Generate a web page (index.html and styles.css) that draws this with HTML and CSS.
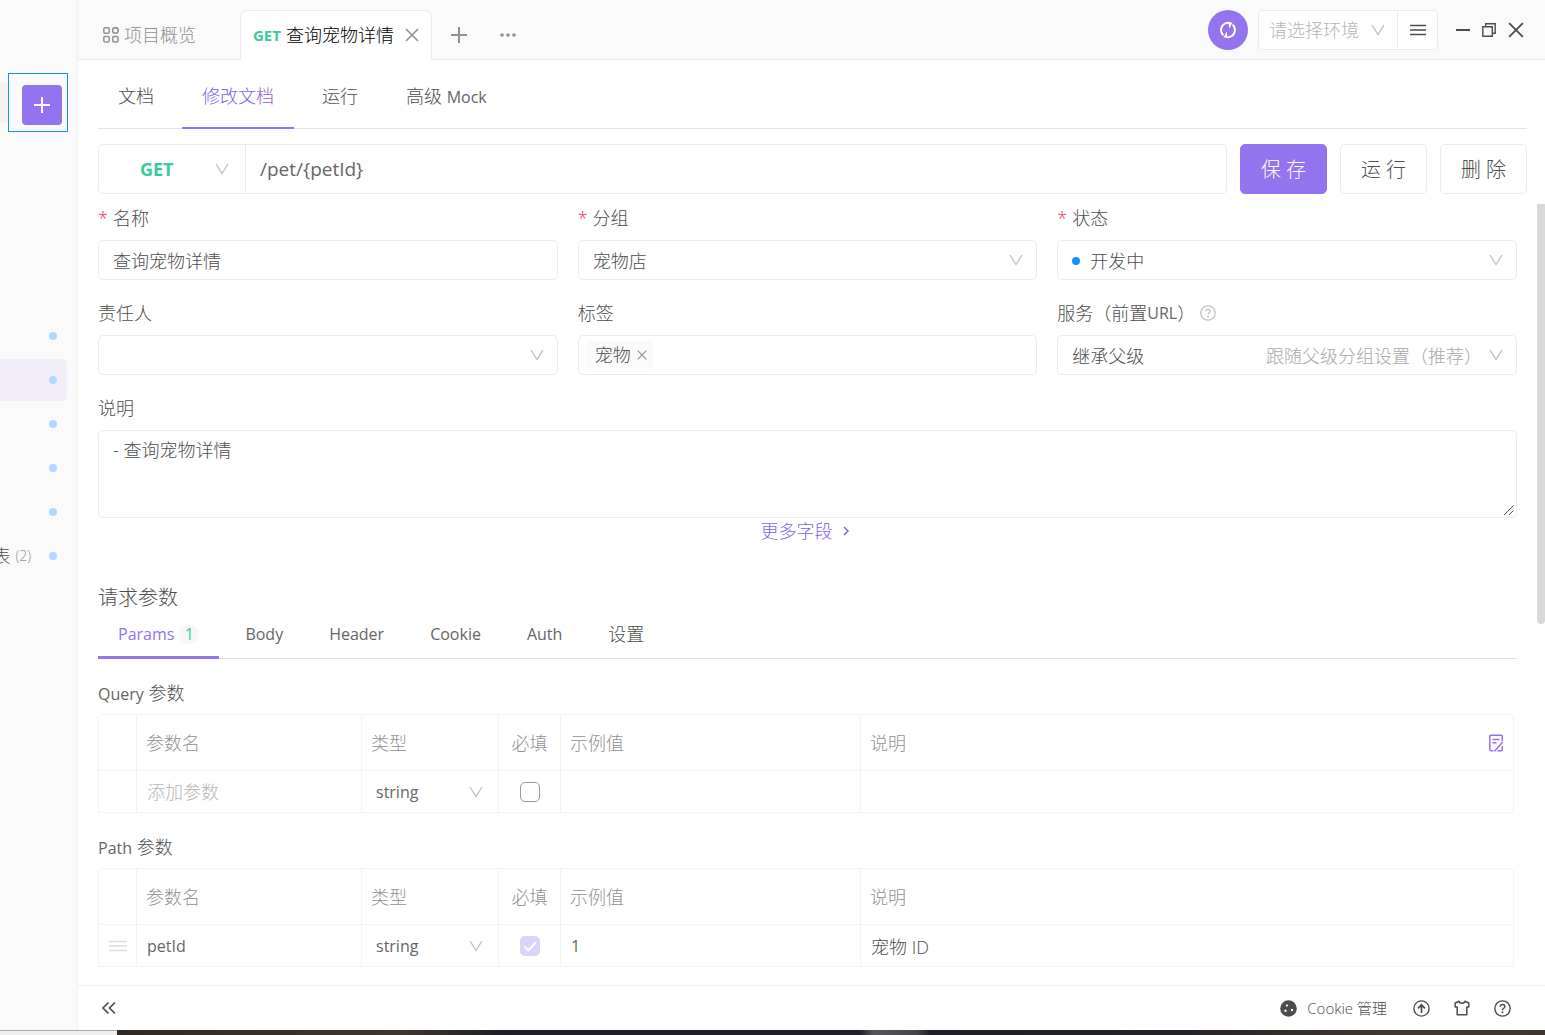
FILE: index.html
```html
<!DOCTYPE html>
<html lang="zh-CN">
<head>
<meta charset="utf-8">
<title>查询宠物详情</title>
<link rel="stylesheet" href="styles.css">
</head>
<body>
<svg class="sprite" aria-hidden="true">
  <symbol id="chevron" viewBox="0 0 14 12"><path d="M1 1l6 9.500L13 1" fill="none" stroke="currentColor" stroke-width="1.300"/></symbol>
  <symbol id="cross" viewBox="0 0 14 14"><path d="M1 1l12 12M13 1L1 13" fill="none" stroke="currentColor" stroke-width="1.600"/></symbol>
  <symbol id="plus" viewBox="0 0 16 16"><path d="M8 0v16M0 8h16" fill="none" stroke="currentColor" stroke-width="2"/></symbol>
  <symbol id="lines" viewBox="0 0 16 12"><path d="M0 1.500h16M0 6h16M0 10.500h16" fill="none" stroke="currentColor" stroke-width="1.600"/></symbol>
  <symbol id="help" viewBox="0 0 16 16"><g fill="none" stroke="currentColor" stroke-width="1.300"><circle cx="8" cy="8" r="7.200"/><path d="M5.900 6.300c0-2.700 4.300-2.700 4.300 0C10.200 7.800 8 7.900 8 9.600"/></g><circle cx="8" cy="11.600" r=".9" fill="currentColor"/></symbol>
</svg>
<div class="app">
  <div class="workspace">
    <aside class="sidebar">
      <div class="sidebar-tools">
        <span class="search-end"></span>
        <div class="add-frame"><button class="add" aria-label="新建"><svg width="16" height="16"><use href="#plus"/></svg></button></div>
      </div>
      <ul class="tree">
        <li><i class="dot"></i></li>
        <li class="current"><i class="dot"></i></li>
        <li><i class="dot"></i></li>
        <li><i class="dot"></i></li>
        <li><i class="dot"></i></li>
        <li><span class="tree-name">表</span><span class="count">(2)</span><i class="dot"></i></li>
      </ul>
    </aside>
    <main class="main">
      <header class="topbar">
        <button class="page-tab overview">
          <svg width="16" height="16" viewBox="0 0 16 16" fill="none" stroke="currentColor" stroke-width="1.500"><rect x=".8" y=".8" width="5.400" height="5.400" rx="1.300"/><circle cx="12.400" cy="3.500" r="2.800"/><rect x=".8" y="9.600" width="5.400" height="5.400" rx="1.300"/><rect x="9.700" y="9.600" width="5.400" height="5.400" rx="1.300"/></svg>
          项目概览
        </button>
        <div class="page-tab open"><b class="verb">GET</b><span>查询宠物详情</span><button class="icon-btn" aria-label="关闭标签"><svg width="14" height="14"><use href="#cross"/></svg></button></div>
        <button class="icon-btn new-tab" aria-label="新标签"><svg width="16" height="16"><use href="#plus"/></svg></button>
        <button class="icon-btn" aria-label="更多"><svg width="16" height="4" viewBox="0 0 16 4" fill="currentColor"><circle cx="2" cy="2" r="1.800"/><circle cx="8" cy="2" r="1.800"/><circle cx="14" cy="2" r="1.800"/></svg></button>
        <div class="topbar-end">
          <button class="sync" aria-label="同步"><svg width="18" height="18" viewBox="0 0 18 18" fill="none" stroke="currentColor" stroke-width="2"><path d="M5.500 15.200A7.200 7.200 0 0 1 11.500 2.200M12.500 2.800A7.200 7.200 0 0 1 6.500 15.800"/><path d="M14 1.200L10.200 7.500 9.600 2zM4 16.800l3.800-6.300.6 5.500z" fill="currentColor" stroke="none"/><path d="M12.200 4.800l2.600-4.300M5.800 13.200l-2.600 4.300" stroke="#9373ee" stroke-width="1.200"/></svg></button>
          <div class="env">
            <div class="pick"><select class="muted" aria-label="环境"><option>请选择环境</option></select><svg class="chev" width="14" height="12"><use href="#chevron"/></svg></div>
            <button class="env-menu" aria-label="环境管理"><svg width="16" height="12"><use href="#lines"/></svg></button>
          </div>
          <div class="window-controls">
            <button class="icon-btn" aria-label="最小化"><svg width="14" height="14" viewBox="0 0 14 14"><path d="M0 7h14" stroke="currentColor" stroke-width="2"/></svg></button>
            <button class="icon-btn" aria-label="还原"><svg width="14" height="14" viewBox="0 0 14 14" fill="none" stroke="currentColor" stroke-width="1.400"><path d="M.8 3.700h9.500v9.500H.8zM3.700 3.500V.8h9.500v9.500h-2.700"/></svg></button>
            <button class="icon-btn" aria-label="关闭"><svg width="16" height="16" viewBox="0 0 14 14"><use href="#cross"/></svg></button>
          </div>
        </div>
      </header>

      <div class="content">
        <nav class="doc-tabs">
          <a href="#doc">文档</a>
          <a href="#edit" class="active">修改文档</a>
          <a href="#run">运行</a>
          <a href="#mock">高级 <span class="latin">Mock</span></a>
        </nav>
        <div class="request-line">
          <div class="url-box">
            <div class="pick method"><select aria-label="请求方法"><option>GET</option></select><svg class="chev" width="14" height="12"><use href="#chevron"/></svg></div>
            <input class="url" aria-label="路径" value="/pet/{petId}">
          </div>
          <button class="btn primary">保 存</button>
          <button class="btn">运 行</button>
          <button class="btn">删 除</button>
        </div>

        <div class="form">
          <div class="item"><label for="name"><span class="req">*</span> 名称</label><input class="control" id="name" value="查询宠物详情"></div>
          <div class="item"><label for="group"><span class="req">*</span> 分组</label><div class="pick control"><select id="group"><option>宠物店</option></select><svg class="chev" width="14" height="12"><use href="#chevron"/></svg></div></div>
          <div class="item"><label for="status"><span class="req">*</span> 状态</label><div class="pick control status"><select id="status"><option>开发中</option></select><i class="status-dot"></i><svg class="chev" width="14" height="12"><use href="#chevron"/></svg></div></div>
          <div class="item"><label for="owner">责任人</label><div class="pick control"><select id="owner"><option></option></select><svg class="chev" width="14" height="12"><use href="#chevron"/></svg></div></div>
          <div class="item"><label for="tags">标签</label><div class="control tags"><span class="tag">宠物<button class="icon-btn" aria-label="移除宠物"><svg width="10" height="10"><use href="#cross"/></svg></button></span><input id="tags"></div></div>
          <div class="item"><label for="server">服务（前置<span class="latin">URL</span>）<svg class="hint-icon" width="16" height="16"><use href="#help"/></svg></label><div class="pick control"><select id="server"><option>继承父级</option></select><span class="pick-note">跟随父级分组设置（推荐）</span><svg class="chev" width="14" height="12"><use href="#chevron"/></svg></div></div>
          <div class="item wide"><label for="desc">说明</label><textarea class="control" id="desc">- 查询宠物详情</textarea></div>
        </div>
        <a class="more" href="#more">更多字段<svg width="8" height="10" viewBox="0 0 8 10"><path d="M2 1l4 4-4 4" fill="none" stroke="currentColor" stroke-width="1.500"/></svg></a>

        <section class="params">
          <h2>请求参数</h2>
          <nav class="param-tabs">
            <a href="#params" class="active">Params<span class="badge">1</span></a>
            <a href="#body">Body</a>
            <a href="#header">Header</a>
            <a href="#cookie">Cookie</a>
            <a href="#auth">Auth</a>
            <a href="#settings" class="cjk">设置</a>
          </nav>
          <h3><span class="latin">Query</span> 参数</h3>
          <table>
            <colgroup><col class="c-grip"><col class="c-name"><col class="c-type"><col class="c-req"><col class="c-example"><col></colgroup>
            <thead><tr><th></th><th>参数名</th><th>类型</th><th class="center">必填</th><th>示例值</th><th><div class="th-split">说明<button class="icon-btn bulk" aria-label="批量编辑"><svg width="16" height="18" viewBox="0 0 16 18" fill="none" stroke="currentColor" stroke-width="1.500"><path d="M14.200 7V2.200a1 1 0 0 0-1-1H2.800a1 1 0 0 0-1 1v13.600a1 1 0 0 0 1 1h2.500M4.500 5.500h7M4.500 8.700h4M6.500 17.300L14.800 8M9.500 16.800h3.700a1 1 0 0 0 1-1v-3.800"/></svg></button></div></th></tr></thead>
            <tbody><tr><td></td><td><input aria-label="参数名" placeholder="添加参数"></td><td><div class="pick"><select class="latin" aria-label="类型"><option>string</option></select><svg class="chev" width="14" height="12"><use href="#chevron"/></svg></div></td><td class="center"><input type="checkbox" aria-label="必填"></td><td><input aria-label="示例值"></td><td><input aria-label="说明"></td></tr></tbody>
          </table>
          <h3><span class="latin">Path</span> 参数</h3>
          <table>
            <colgroup><col class="c-grip"><col class="c-name"><col class="c-type"><col class="c-req"><col class="c-example"><col></colgroup>
            <thead><tr><th></th><th>参数名</th><th>类型</th><th class="center">必填</th><th>示例值</th><th>说明</th></tr></thead>
            <tbody><tr><td class="center grip"><svg width="18" height="12" viewBox="0 0 16 12" preserveAspectRatio="none"><use href="#lines"/></svg></td><td><input class="latin" aria-label="参数名" value="petId"></td><td><div class="pick"><select class="latin" aria-label="类型"><option>string</option></select><svg class="chev" width="14" height="12"><use href="#chevron"/></svg></div></td><td class="center"><input type="checkbox" aria-label="必填" checked disabled></td><td><input class="latin" aria-label="示例值" value="1"></td><td><input aria-label="说明" value="宠物 ID"></td></tr></tbody>
          </table>
        </section>
      </div>
      <div class="scroll-thumb"></div>

      <footer class="statusbar">
        <button class="icon-btn" aria-label="收起"><svg width="14" height="14" viewBox="0 0 14 14"><path d="M6.500 1.500L1 7l5.500 5.500M13 1.500L7.500 7l5.500 5.500" fill="none" stroke="currentColor" stroke-width="1.700"/></svg></button>
        <div class="status-end">
          <button class="icon-btn cookie"><svg width="17" height="17" viewBox="0 0 17 17"><circle cx="8.500" cy="8.500" r="8.300" fill="currentColor"/><g fill="#fff"><circle cx="7" cy="5.500" r="1.100"/><circle cx="5.500" cy="10.800" r="1.200"/><circle cx="12" cy="10" r="1.200"/></g></svg><span>Cookie 管理</span></button>
          <button class="icon-btn" aria-label="更新"><svg width="17" height="17" viewBox="0 0 17 17" fill="none" stroke="currentColor" stroke-width="1.400"><circle cx="8.500" cy="8.500" r="7.600"/><path d="M8.500 13V5M5 8.300l3.500-3.500L12 8.300" stroke-width="1.700"/></svg></button>
          <button class="icon-btn" aria-label="主题"><svg width="16" height="16" viewBox="0 0 16 16" fill="none" stroke="currentColor" stroke-width="1.500"><path d="M1.200 3L5 1.200C5.500 4 10.500 4 11 1.200L14.800 3v4h-2v7.700H3.200V7h-2z" stroke-linejoin="round"/></svg></button>
          <button class="icon-btn" aria-label="帮助"><svg width="17" height="17"><use href="#help"/></svg></button>
        </div>
      </footer>
    </main>
  </div>
  <div class="desktop-edge"><span></span></div>
</div>
</body>
</html>
```
FILE: styles.css
```css
:root {
  --purple: #9373ee;
  --green: #3cc99a;
  --text: #4d4d4d;
  --muted: #919191;
  --faint: #b5b5b5;
  --line: #ebebeb;
  --soft: #f3f3f3;
}

* { box-sizing: border-box; }

body {
  margin: 0;
  color: var(--text);
  background: #fff;
  font: 300 18px/28px "Open Sans", "Noto Sans CJK SC", sans-serif;
}

button, input, select, textarea { font: inherit; color: inherit; }
button { padding: 0; border: 0; background: none; cursor: pointer; }
a { color: inherit; text-decoration: none; }
svg { display: block; flex: none; }
.sprite { display: none; }
.latin { color: #666; font-size: 16px; font-weight: 400; line-height: 20px; }

.app { display: flex; flex-direction: column; min-height: 100vh; }
.workspace { display: flex; flex: 1; }

/* sidebar */
.sidebar { width: 78px; flex: none; overflow: hidden; background: #fafafa; border-right: 1px solid #f0f0f0; }
.sidebar-tools { display: flex; justify-content: space-between; align-items: center; padding: 73px 9px 0 0; }
.search-end { width: 12px; height: 40px; margin-right: -4px; border-radius: 0 5px 5px 0; background: #f3f3f3; }
.add-frame { width: 60px; height: 59px; padding: 11px 5px 7px 13px; border: 1px solid #1296db; background: #fafafa; z-index: 1; }
.add { display: grid; place-items: center; width: 40px; height: 40px; border-radius: 4px; background: var(--purple); color: #fff; }
.tree { list-style: none; margin: 183px 10px 0 0; padding: 0; display: grid; grid-template-columns: minmax(0, 1fr); gap: 2px; }
.tree li { display: flex; align-items: center; justify-content: flex-end; height: 42px; padding-right: 10px; border-radius: 0 5px 5px 0; }
.tree .current { background: #f1eef9; }
.tree-name { flex: none; }
.count { margin: 0 18px 0 5px; color: var(--muted); font-size: 14px; }
.dot { flex: none; width: 8px; height: 8px; border-radius: 50%; background: #b3d8ff; }

/* top bar */
.main { position: relative; display: flex; flex: 1; flex-direction: column; min-width: 0; }
.topbar { display: flex; height: 60px; padding-top: 10px; background: #fafafa; box-shadow: inset 0 -1px var(--line); color: var(--muted); }
.icon-btn { display: flex; align-items: center; }
.page-tab { display: flex; align-items: center; }
.overview { width: 162px; padding-left: 25px; gap: 5px; }
.open { width: 192px; padding: 0 12px 2px; gap: 5px; border: 1px solid var(--line); border-bottom: 0; border-radius: 8px 8px 0 0; background: #fff; color: #000; }
.open .icon-btn { margin-left: auto; color: var(--muted); }
.verb { color: var(--green); font-size: 15px; font-weight: 700; }
.new-tab { margin: 0 33px 0 19px; }
.topbar-end { display: flex; margin-left: auto; padding-right: 21px; gap: 10px; }
.sync { display: grid; place-items: center; width: 40px; height: 40px; border-radius: 50%; background: var(--purple); color: #fff; }
.env { display: flex; width: 180px; height: 40px; border: 1px solid var(--line); border-radius: 4px; background: #fff; }
.env .pick { flex: 1; }
.env .pick select { padding-left: 10px; }
.env .chev { margin-right: 12px; }
.env-menu { display: grid; place-items: center; width: 40px; border-left: 1px solid var(--line); color: var(--text); }
.window-controls { display: flex; height: 40px; margin-left: 8px; gap: 12px; color: var(--text); }

/* stacked select with its arrow */
.pick { display: grid; align-items: center; }
.pick > * { grid-area: 1 / 1; }
.pick select { width: 100%; height: 100%; padding: 0 14px; border: 0; background: none; appearance: none; outline: 0; }
.pick select.muted { color: var(--faint); }
.chev { justify-self: end; margin-right: 13px; color: #bfbfbf; pointer-events: none; }

/* document tabs and address */
.content { flex: 1; padding: 0 28px 0 20px; }
.doc-tabs { display: flex; gap: 8px; margin-right: -10px; height: 69px; border-bottom: 1px solid #e3e3e3; }
.doc-tabs a { height: 69px; padding: 22px 20px 0; }
.doc-tabs .active { border-bottom: 2px solid var(--purple); color: #8460ec; }
.request-line { display: flex; gap: 13px; margin: 15px -10px 10px 0; }
.url-box { display: flex; flex: 1; height: 50px; border: 1px solid var(--line); border-radius: 5px; }
.method { width: 147px; border-right: 1px solid var(--line); }
.method select { padding-left: 41px; color: var(--green); font-size: 18px; font-weight: 700; }
.method .chev { margin-right: 16px; }
.url { flex: 1; min-width: 0; padding: 0 14px; border: 0; background: none; outline: 0; color: #666; font-size: 19px; font-weight: 400; }
.btn { width: 87px; height: 50px; padding-top: 2px; border: 1px solid var(--line); border-radius: 5px; background: #fff; font-size: 20px; }
.primary { border-color: var(--purple); background: var(--purple); color: #fff; }

/* form */
.form { display: grid; grid-template-columns: repeat(3, minmax(0, 1fr)); gap: 19px 20px; }
.item { display: grid; gap: 8px; }
.item label { display: flex; align-items: center; gap: 5px; height: 28px; white-space: nowrap; }
.item label .latin { margin: 0 -5px; }
.req { color: #e0284e; }
.wide { grid-column: 1 / -1; }
.control { width: 100%; height: 40px; padding: 0 14px; border: 1px solid var(--line); border-radius: 5px; background: #fff; outline: 0; }
.pick.control { padding: 0; }
.control select { padding-top: 2px; }
.status select { padding-left: 32px; }
.status-dot { width: 8px; height: 8px; margin: 2px 0 0 14px; border-radius: 50%; background: #1890ff; }
.tags { display: flex; align-items: center; padding: 0 7px; gap: 8px; }
.tags input { flex: 1; min-width: 0; border: 0; outline: 0; }
.tag { display: flex; gap: 6px; padding: 0 6px 0 9px; border-radius: 4px; background: #fafafa; }
.tag .icon-btn { color: var(--muted); }
.hint-icon { color: #bfbfbf; }
.pick-note { justify-self: end; margin-right: 34px; padding-top: 2px; color: #a8a8a8; pointer-events: none; }
textarea.control { display: block; height: 88px; padding: 5px 14px; resize: vertical; }
textarea::-webkit-resizer { background: url("data:image/svg+xml,%3Csvg xmlns='http://www.w3.org/2000/svg' width='15' height='15'%3E%3Cpath d='M3 13L12.500 3.500M8 13L12.500 8.500' fill='none' stroke='%23555'/%3E%3C/svg%3E") no-repeat right bottom; }
.more { display: flex; align-items: center; justify-content: center; gap: 9px; height: 26px; padding-right: 5px; color: #8460ec; }

/* request parameters */
h2, h3 { margin: 0; font-weight: 300; }
h2 { margin-top: 40px; font-size: 20px; line-height: 27px; }
h3 { margin: 20px 0 7px; font-size: 18px; }
.param-tabs { display: flex; gap: 6px; height: 48px; border-bottom: 1px solid #e3e3e3; color: #666; font-size: 16px; font-weight: 400; }
.param-tabs a { display: flex; align-items: center; height: 48px; padding: 0 20px; border-bottom: 3px solid transparent; }
.param-tabs .active { border-color: var(--purple); color: var(--purple); }
.param-tabs .cjk { color: var(--text); font-size: 18px; font-weight: 300; }
.badge { width: 20px; margin-left: 5px; border-radius: 50%; background: #f7f7f7; color: var(--green); line-height: 20px; text-align: center; }
table { width: calc(100% - 3px); border: 1px solid var(--soft); border-collapse: separate; border-spacing: 0; border-radius: 5px 5px 0 0; table-layout: fixed; }
.c-grip { width: 37px; }
.c-name { width: 225px; }
.c-type { width: 137px; }
.c-req { width: 62px; }
.c-example { width: 300px; }
th, td { padding: 0 9px; border-left: 1px solid var(--soft); font-weight: 300; text-align: left; }
th:first-child, td:first-child { border-left: 0; }
th { height: 55px; color: var(--muted); }
td { height: 42px; padding: 0 10px; border-top: 1px solid var(--soft); }
td .pick { margin: 0 -10px; }
td .pick .chev { margin-right: 15px; }
th.center, td.center { padding: 0; text-align: center; }
td input { width: 100%; height: 32px; padding: 0; border: 0; outline: 0; background: none; }
input::placeholder { color: var(--faint); opacity: 1; }
.th-split { display: flex; align-items: center; justify-content: space-between; }
.bulk { color: var(--purple); }
.grip svg { margin: 0 auto; color: #ddd; }
input[type="checkbox"] { display: block; width: 20px; height: 20px; margin: 0 auto; border: 1px solid #999; border-radius: 5px; appearance: none; }
input[type="checkbox"]:checked { border: 0; background: #dcd2fa url("data:image/svg+xml,%3Csvg xmlns='http://www.w3.org/2000/svg' viewBox='0 0 20 20'%3E%3Cpath d='M4.500 10.500l3.800 4 7.500-8' fill='none' stroke='white' stroke-width='2'/%3E%3C/svg%3E"); }

.scroll-thumb { position: absolute; top: 204px; right: 0; width: 8px; height: 420px; border-radius: 0 0 4px 4px; background: #d9d9d9; }

/* status bar */
.statusbar { display: flex; align-items: center; height: 45px; padding: 0 34px 0 24px; border-top: 1px solid #f0f0f0; }
.status-end { display: flex; align-items: center; gap: 24px; margin-left: auto; }
.cookie { gap: 10px; margin-right: 2px; font-size: 15px; }
.desktop-edge { height: 5px; border-top: 1px solid #aaa; background: #eee; }
.desktop-edge span { display: block; height: 5px; margin: -1px 0 0 117px; background: linear-gradient(90deg, #302822, #40352b 20%, #1e1e28 27%, #20202a 52%, #55555a 53%, #44444c 56%, #1e1e28 57%, #262328 75%, #44382e 90%, #40342c); }
```
